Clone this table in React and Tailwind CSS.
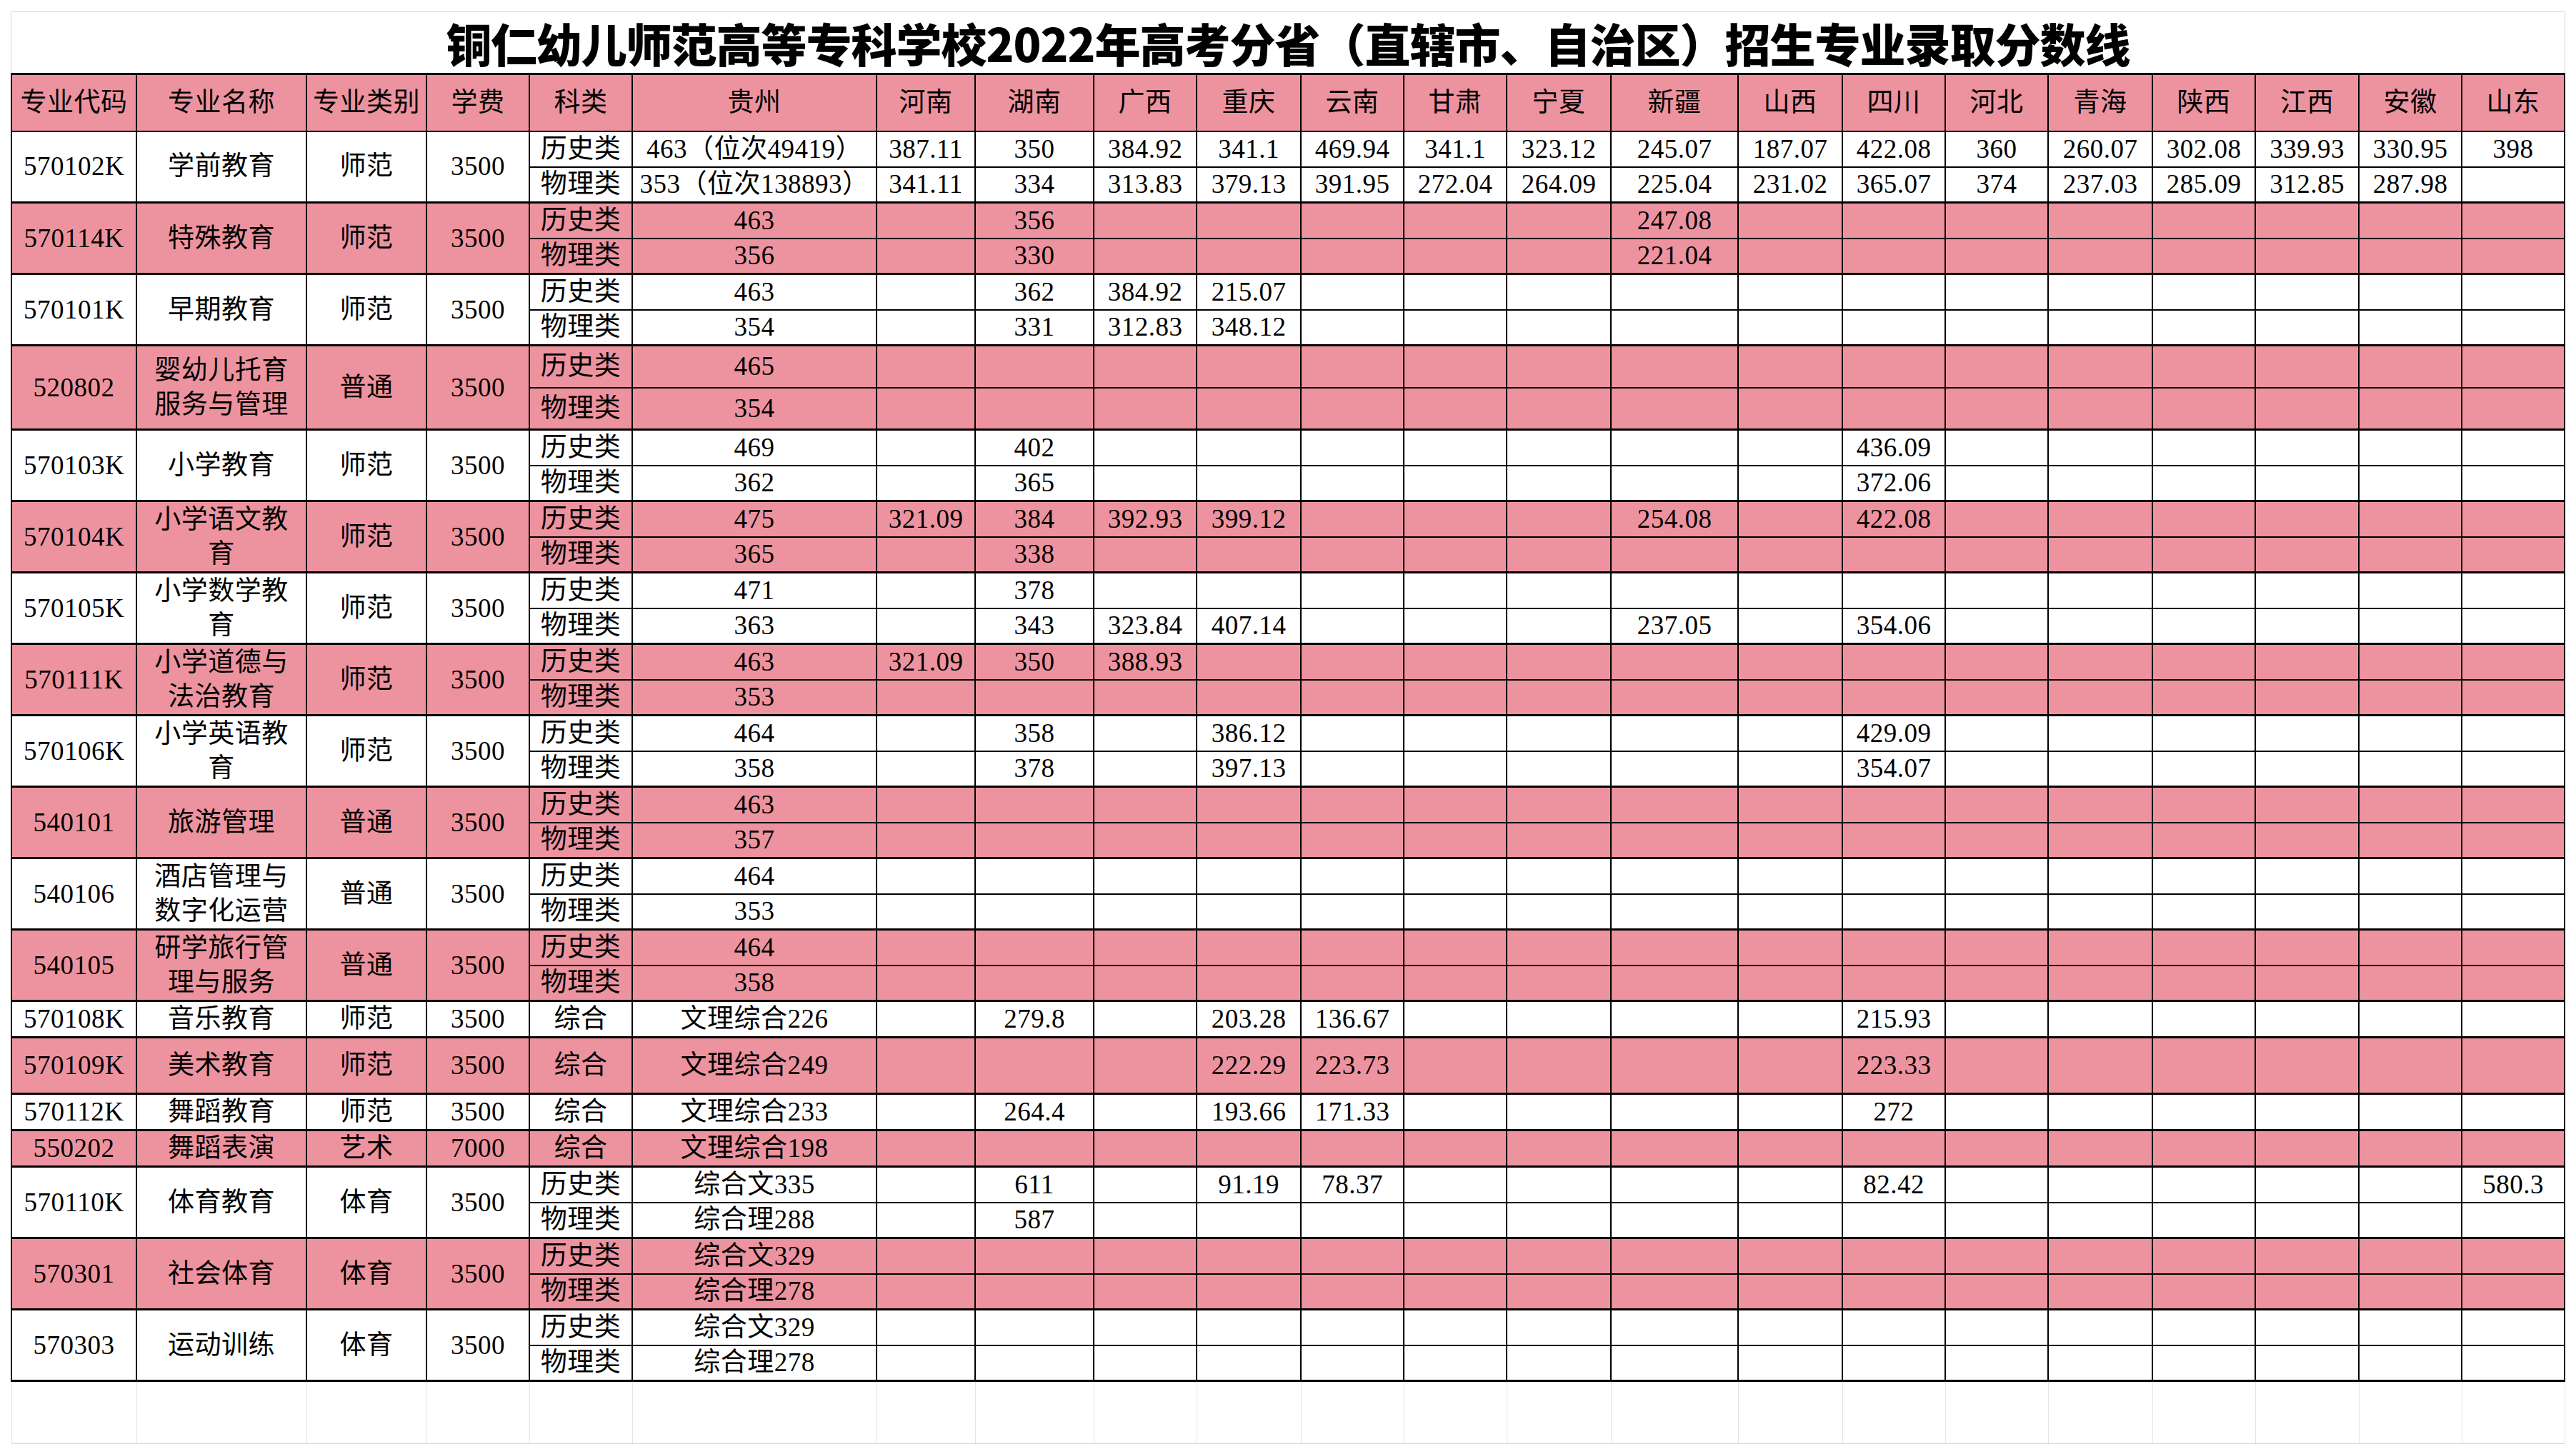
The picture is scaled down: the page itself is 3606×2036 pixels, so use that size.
import React from "react";

const PROV = ["河南","湖南","广西","重庆","云南","甘肃","宁夏","新疆","山西","四川","河北","青海","陕西","江西","安徽","山东"];
const pad = (a) => [...a, ...Array(16 - a.length).fill("")];

const G = [
  { code: "570102K", name: ["学前教育"], type: "师范", fee: "3500", subs: [
    ["历史类", "463（位次49419）", ["387.11","350","384.92","341.1","469.94","341.1","323.12","245.07","187.07","422.08","360","260.07","302.08","339.93","330.95","398"]],
    ["物理类", "353（位次138893）", ["341.11","334","313.83","379.13","391.95","272.04","264.09","225.04","231.02","365.07","374","237.03","285.09","312.85","287.98",""]],
  ]},
  { code: "570114K", name: ["特殊教育"], type: "师范", fee: "3500", subs: [
    ["历史类", "463", ["","356","","","","","","247.08"]],
    ["物理类", "356", ["","330","","","","","","221.04"]],
  ]},
  { code: "570101K", name: ["早期教育"], type: "师范", fee: "3500", subs: [
    ["历史类", "463", ["","362","384.92","215.07"]],
    ["物理类", "354", ["","331","312.83","348.12"]],
  ]},
  { code: "520802", name: ["婴幼儿托育", "服务与管理"], type: "普通", fee: "3500", h: "60", subs: [
    ["历史类", "465", []],
    ["物理类", "354", []],
  ]},
  { code: "570103K", name: ["小学教育"], type: "师范", fee: "3500", subs: [
    ["历史类", "469", ["","402","","","","","","","","436.09"]],
    ["物理类", "362", ["","365","","","","","","","","372.06"]],
  ]},
  { code: "570104K", name: ["小学语文教", "育"], type: "师范", fee: "3500", subs: [
    ["历史类", "475", ["321.09","384","392.93","399.12","","","","254.08","","422.08"]],
    ["物理类", "365", ["","338"]],
  ]},
  { code: "570105K", name: ["小学数学教", "育"], type: "师范", fee: "3500", subs: [
    ["历史类", "471", ["","378"]],
    ["物理类", "363", ["","343","323.84","407.14","","","","237.05","","354.06"]],
  ]},
  { code: "570111K", name: ["小学道德与", "法治教育"], type: "师范", fee: "3500", subs: [
    ["历史类", "463", ["321.09","350","388.93"]],
    ["物理类", "353", []],
  ]},
  { code: "570106K", name: ["小学英语教", "育"], type: "师范", fee: "3500", subs: [
    ["历史类", "464", ["","358","","386.12","","","","","","429.09"]],
    ["物理类", "358", ["","378","","397.13","","","","","","354.07"]],
  ]},
  { code: "540101", name: ["旅游管理"], type: "普通", fee: "3500", subs: [
    ["历史类", "463", []],
    ["物理类", "357", []],
  ]},
  { code: "540106", name: ["酒店管理与", "数字化运营"], type: "普通", fee: "3500", subs: [
    ["历史类", "464", []],
    ["物理类", "353", []],
  ]},
  { code: "540105", name: ["研学旅行管", "理与服务"], type: "普通", fee: "3500", subs: [
    ["历史类", "464", []],
    ["物理类", "358", []],
  ]},
  { code: "570108K", name: ["音乐教育"], type: "师范", fee: "3500", subs: [
    ["综合", "文理综合226", ["","279.8","","203.28","136.67","","","","","215.93"]],
  ]},
  { code: "570109K", name: ["美术教育"], type: "师范", fee: "3500", h: "81", subs: [
    ["综合", "文理综合249", ["","","","222.29","223.73","","","","","223.33"]],
  ]},
  { code: "570112K", name: ["舞蹈教育"], type: "师范", fee: "3500", subs: [
    ["综合", "文理综合233", ["","264.4","","193.66","171.33","","","","","272"]],
  ]},
  { code: "550202", name: ["舞蹈表演"], type: "艺术", fee: "7000", subs: [
    ["综合", "文理综合198", []],
  ]},
  { code: "570110K", name: ["体育教育"], type: "体育", fee: "3500", subs: [
    ["历史类", "综合文335", ["","611","","91.19","78.37","","","","","82.42","","","","","","580.3"]],
    ["物理类", "综合理288", ["","587"]],
  ]},
  { code: "570301", name: ["社会体育"], type: "体育", fee: "3500", subs: [
    ["历史类", "综合文329", []],
    ["物理类", "综合理278", []],
  ]},
  { code: "570303", name: ["运动训练"], type: "体育", fee: "3500", subs: [
    ["历史类", "综合文329", []],
    ["物理类", "综合理278", []],
  ]},
];

const rowH = (h) => (h === "60" ? "h-[59px]" : h === "81" ? "h-[79px]" : "h-[50px]");

function Td({ children, last, rowSpan, className = "" }) {
  return (
    <td
      rowSpan={rowSpan}
      className={
        "border-2 border-black p-0 text-center align-middle whitespace-nowrap overflow-hidden " +
        (last ? "border-b-[3px] " : "") +
        className
      }
    >
      {children}
    </td>
  );
}

export default function App() {
  return (
    <div className="min-h-[2036px] w-[3606px] bg-white pl-[15px] pt-[16px] text-black">
      <div className="w-[3576px]">
        <div className="flex h-[86px] items-center justify-center border-x border-t border-[#d9d9d9] pb-[2px] font-['Noto_Sans_CJK_SC',sans-serif] text-[64px] font-black leading-none tracking-[-1px]">
          铜仁幼儿师范高等专科学校2022年高考分省（直辖市、自治区）招生专业录取分数线
        </div>
        <table className="w-[3574px] table-fixed border-collapse font-['Liberation_Serif','Noto_Sans_CJK_SC',serif] text-[37px] leading-[44px] tracking-[0.5px]">
          <colgroup>
            <col className="w-[175px]" />
            <col className="w-[238px]" />
            <col className="w-[168px]" />
            <col className="w-[144px]" />
            <col className="w-[144px]" />
            <col className="w-[342px]" />
            <col className="w-[138px]" />
            <col className="w-[166px]" />
            <col className="w-[144px]" />
            <col className="w-[146px]" />
            <col className="w-[144px]" />
            <col className="w-[144px]" />
            <col className="w-[146px]" />
            <col className="w-[178px]" />
            <col className="w-[146px]" />
            <col className="w-[144px]" />
            <col className="w-[144px]" />
            <col className="w-[146px]" />
            <col className="w-[144px]" />
            <col className="w-[145px]" />
            <col className="w-[144px]" />
            <col className="w-[144px]" />
          </colgroup>
          <thead>
            <tr className="h-[80px] bg-[#ed939f]">
              {["专业代码","专业名称","专业类别","学费","科类","贵州",...PROV].map((t) => (
                <th key={t} className="border-2 border-t-[3px] border-black p-0 text-center align-middle font-normal whitespace-nowrap">
                  {t}
                </th>
              ))}
            </tr>
          </thead>
          <tbody>
            {G.map((g, gi) => {
              const bg = gi % 2 === 1 ? "bg-[#ed939f]" : "bg-white";
              const n = g.subs.length;
              return g.subs.map((s, si) => {
                const last = si === n - 1;
                const vals = pad(s[2]);
                return (
                  <tr key={g.code + si} className={rowH(g.h) + " " + bg}>
                    {si === 0 && (
                      <>
                        <Td rowSpan={n} last>{g.code}</Td>
                        <Td rowSpan={n} last className="leading-[48px]">
                          {g.name.map((l, i) => (
                            <div key={i}>{l}</div>
                          ))}
                        </Td>
                        <Td rowSpan={n} last>{g.type}</Td>
                        <Td rowSpan={n} last>{g.fee}</Td>
                      </>
                    )}
                    <Td last={last}>{s[0]}</Td>
                    <Td last={last}>{s[1]}</Td>
                    {vals.map((v, i) => (
                      <Td key={i} last={last}>{v}</Td>
                    ))}
                  </tr>
                );
              });
            })}
            <tr className="h-[88px] bg-white">
              {Array.from({ length: 22 }).map((_, i) => (
                <td key={i} className="border-x border-b border-[#e4e4e4] border-b-[#d9d9d9] p-0"></td>
              ))}
            </tr>
          </tbody>
        </table>
      </div>
    </div>
  );
}
